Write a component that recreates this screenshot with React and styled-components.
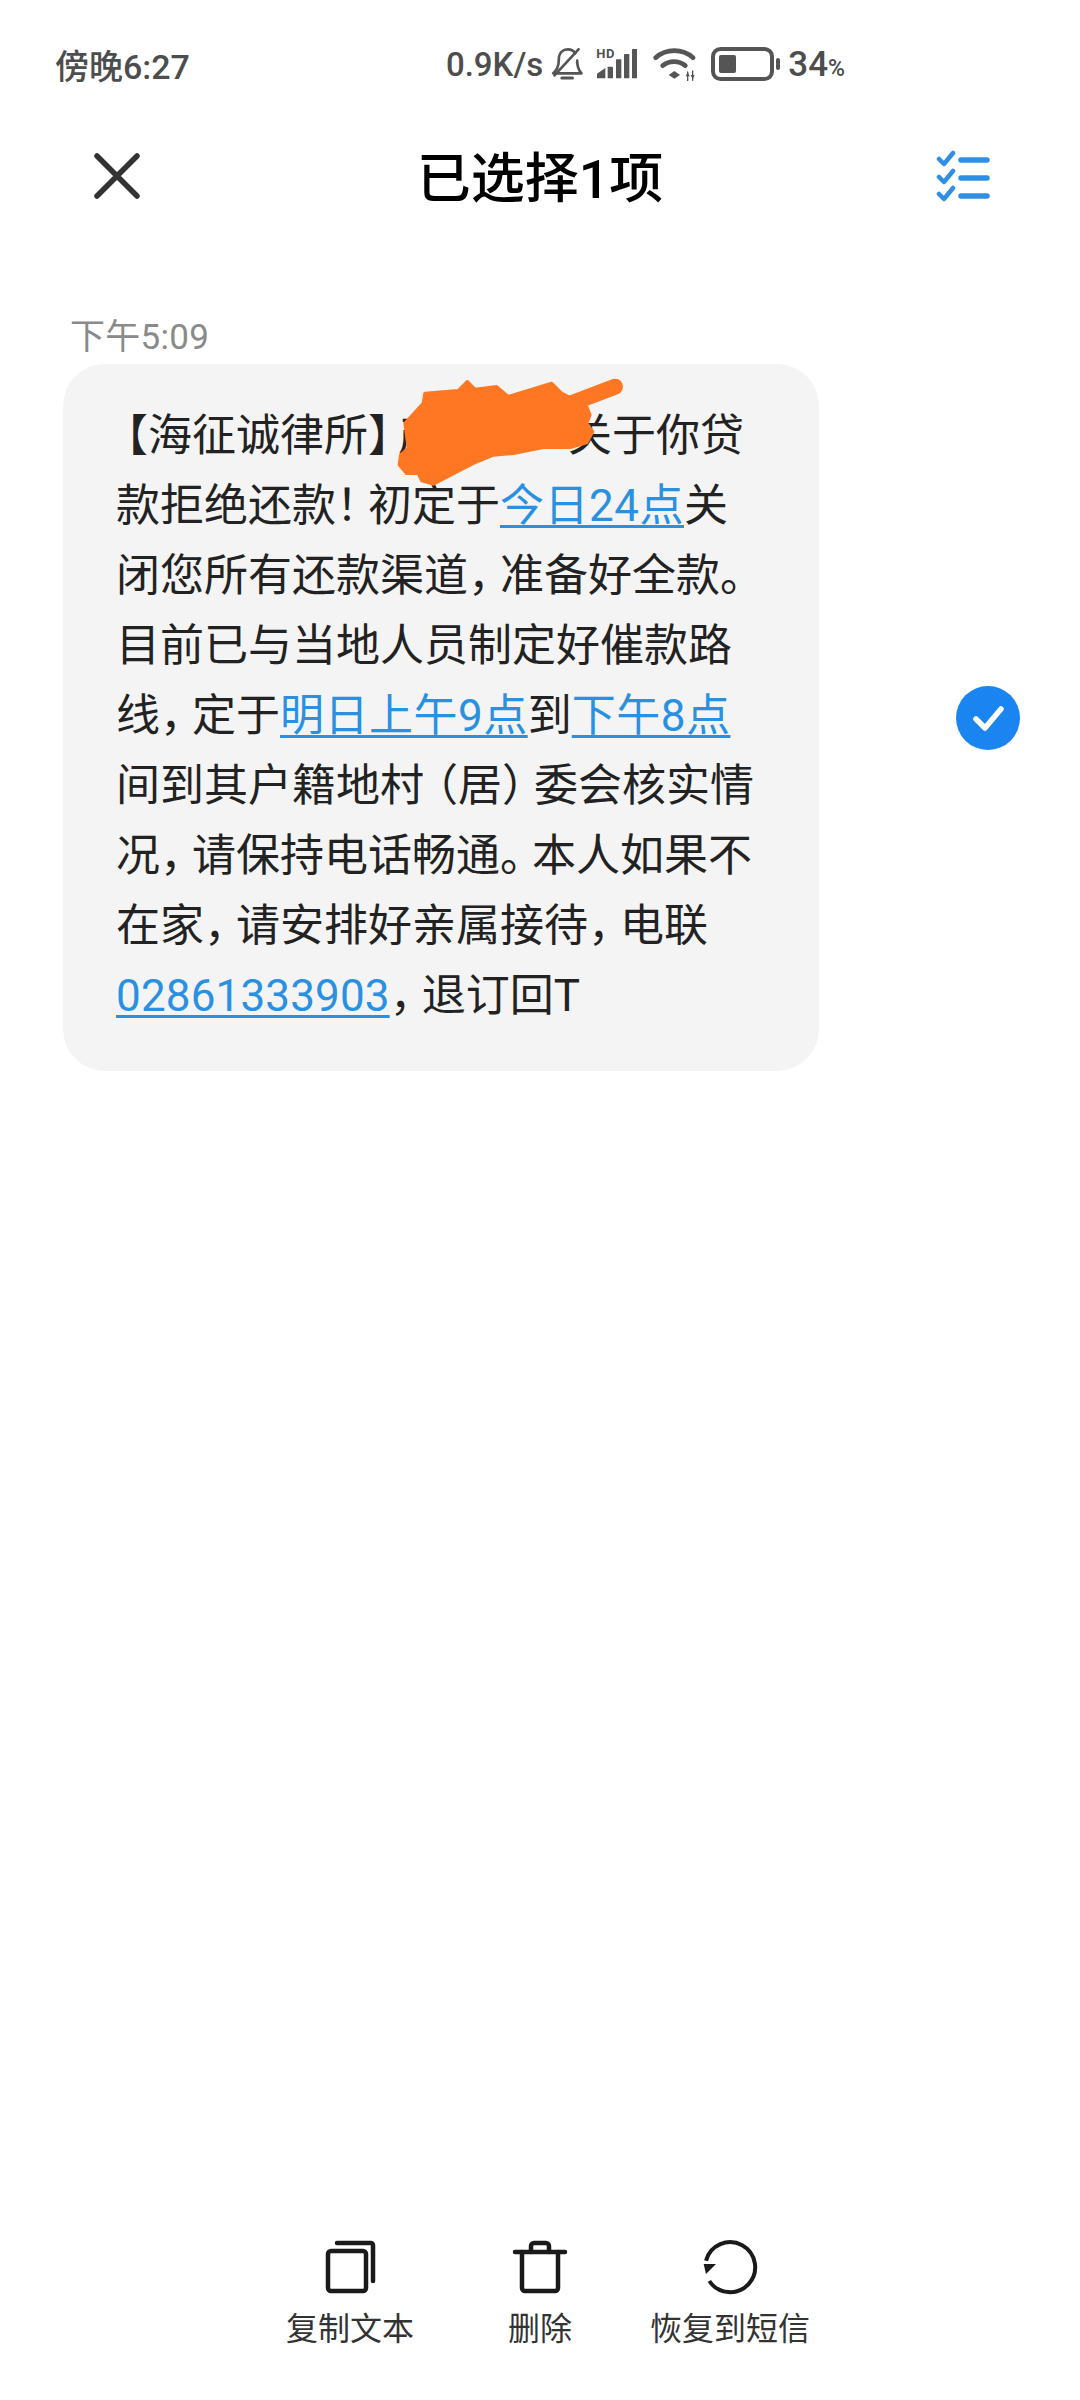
import React from "react";
import styled, { createGlobalStyle } from "styled-components";

const Global = createGlobalStyle`
  html, body { margin: 0; padding: 0; background: #fff; }
  body { font-family: Roboto, "Noto Sans CJK SC", sans-serif; }
`;

const Page = styled.div`
  width: 1080px;
  height: 2400px;
  display: flex;
  flex-direction: column;
  background: #fff;
  overflow: hidden;
`;

const StatusBar = styled.div`
  height: 128px;
  box-sizing: border-box;
  padding: 0 235px 0 55px;
  display: flex;
  align-items: center;
  color: #4d4d4d;
`;

const Clock = styled.span`
  font-size: 34px;
  font-weight: 500;
`;

const StatusRight = styled.div`
  margin-left: auto;
  display: flex;
  align-items: center;
`;

const Speed = styled.span`
  font-size: 33px;
  font-weight: 500;
  color: #4d4d4d;
`;

const StatusSvg = styled.svg`
  display: block;
  flex: none;
  margin-left: ${(p) => p.$gap}px;
`;

const SignalWrap = styled.span`
  position: relative;
  display: block;
  margin-left: 14px;
  width: 40px;
  height: 30px;
`;

const HdMark = styled.span`
  position: absolute;
  left: -1px;
  top: -2px;
  font-size: 13px;
  font-weight: 700;
  color: #505050;
  line-height: 13px;
  letter-spacing: 0.5px;
`;

const Percent = styled.span`
  font-size: 35px;
  color: #4d4d4d;
  margin-left: 8px;
  font-weight: 500;
`;

const PercentSign = styled.span`
  font-size: 23px;
  font-weight: 500;
`;

const NavBar = styled.div`
  height: 96px;
  position: relative;
  display: flex;
  align-items: center;
  justify-content: space-between;
  padding: 0 90px 0 94px;
`;

const Title = styled.div`
  position: absolute;
  left: 0;
  right: 0;
  text-align: center;
  font-size: 54px;
  font-weight: 500;
  color: #000;
  padding-bottom: 4px;
`;

const Stamp = styled.div`
  margin: 91px 0 0 70px;
  height: 49px;
  line-height: 46px;
  font-size: 35px;
  color: #8a8a8a;
  letter-spacing: 0.3px;
`;

const MessageRow = styled.div`
  display: flex;
  align-items: center;
  margin: 0 0 0 63px;
`;

const Bubble = styled.div`
  position: relative;
  width: 756px;
  height: 707px;
  box-sizing: border-box;
  padding: 37px 0 0 53px;
  background: #f4f4f4;
  border-radius: 42px;
  font-size: 44px;
  line-height: 70px;
  color: #222;
`;

const TextLine = styled.div`
  white-space: nowrap;
  height: 70px;
`;

const Link = styled.span`
  color: #2a90e2;
  letter-spacing: ${(p) => p.$spacing ?? 0.5}px;
  text-decoration: underline;
  text-decoration-thickness: 3px;
  text-underline-offset: 4px;
`;

const Punct = styled.span`
  margin-right: -12px;
`;

const OpenBracket = styled.span`
  margin-left: ${(p) => p.$shift}px;
`;

const CloseBracket = styled.span`
  margin-right: -14px;
`;

const HiddenRun = styled.span`
  display: inline-block;
  width: 126px;
`;

const Redaction = styled.svg`
  position: absolute;
  inset: 0;
  width: 756px;
  height: 707px;
`;

const CheckMark = styled.svg`
  width: 64px;
  height: 64px;
  margin-left: 137px;
  flex: none;
`;

const Toolbar = styled.div`
  margin-top: auto;
  height: 160px;
  margin-bottom: 4px;
  display: flex;
  justify-content: center;
`;

const ToolItem = styled.div`
  width: 190px;
  display: flex;
  flex-direction: column;
  align-items: center;
  font-size: 32px;
  color: #333;
`;

const ToolIcon = styled.svg`
  width: 56px;
  height: 56px;
  margin: 3px 0 11px;
`;

const ToolLabel = styled.span`
  white-space: nowrap;
  line-height: 46px;
`;

const BellIcon = () => (
  <StatusSvg $gap={8} width="32" height="32" viewBox="28 40 95 96" fill="none" stroke="#555" strokeWidth="8" strokeLinecap="round" strokeLinejoin="round">
    <path d="M34 116c10-10 17-18 17-42 0-20 12-30 27-30 10 0 18 4 22 12M106 78c0 16 4 28 13 38H34" />
    <path d="M60 130h32" strokeWidth="9" />
    <path d="M110 44 38 122" />
  </StatusSvg>
);

const SignalIcon = () => (
  <SignalWrap>
    <HdMark>HD</HdMark>
    <svg width="40" height="30" viewBox="165 42 120 90" fill="#555" style={{ display: "block" }}>
      <path d="M165 130v-14l25-17v31z" />
      <rect x="197" y="95" width="16" height="35" rx="2" />
      <rect x="222" y="73" width="16" height="57" rx="2" />
      <rect x="246" y="57" width="16" height="73" rx="2" />
      <rect x="270" y="42" width="16" height="88" rx="2" />
    </svg>
  </SignalWrap>
);

const WifiIcon = () => (
  <StatusSvg $gap={16} width="43" height="34" viewBox="333 38 129 102" fill="none" stroke="#555" strokeWidth="14" strokeLinecap="round">
    <path d="M341 70c32-28 80-28 112 0" />
    <path d="M362 94c20-16 48-16 68 0" />
    <path d="M380 122l17-12 17 12-17 11z" fill="#555" stroke="none" />
    <path d="M437 113v26M452 110v28" strokeWidth="4" />
    <path d="M431 126l6-13 6 13zM446 122l6 13 6-13z" fill="#555" stroke="none" />
  </StatusSvg>
);

const BatteryIcon = () => (
  <StatusSvg $gap={15} width="69" height="34" viewBox="0 0 69 34" fill="none">
    <rect x="2" y="2" width="59" height="30" rx="7.500" stroke="#555" strokeWidth="4" />
    <rect x="8" y="8" width="17" height="18" rx="2" fill="#555" />
    <rect x="65" y="11" width="4" height="12" rx="2" fill="#555" />
  </StatusSvg>
);

const CloseIcon = () => (
  <svg width="46" height="46" viewBox="0 0 46 46" fill="none" stroke="#333" strokeWidth="5.500" strokeLinecap="round">
    <path d="M3 3l40 40M43 3 3 43" />
  </svg>
);

const ChecklistIcon = () => (
  <svg width="54" height="52" viewBox="0 0 54 52" fill="none" stroke="#2f8fe4" strokeWidth="5.500" strokeLinecap="round" strokeLinejoin="round">
    <path d="M3 9l5 5 9-11M3 27l5 5 9-11M3 44l5 5 9-11" strokeWidth="4.500" />
    <path d="M25 10h26M25 28h26M25 46h26" />
  </svg>
);

const P = ({ children }) => <Punct>{children}</Punct>;

export default function App() {
  return (
    <Page lang="zh-CN">
      <Global />
      <StatusBar>
        <Clock>傍晚6:27</Clock>
        <StatusRight>
          <Speed>0.9K/s</Speed>
          <BellIcon />
          <SignalIcon />
          <WifiIcon />
          <BatteryIcon />
          <Percent>34<PercentSign>%</PercentSign></Percent>
        </StatusRight>
      </StatusBar>

      <NavBar>
        <Title>已选择1项</Title>
        <CloseIcon />
        <ChecklistIcon />
      </NavBar>

      <Stamp>下午5:09</Stamp>

      <MessageRow>
        <Bubble>
          <TextLine><OpenBracket $shift={-12}>【</OpenBracket>海征诚律所<CloseBracket>】</CloseBracket>产<HiddenRun />关于你贷</TextLine>
          <TextLine>款拒绝还款<P>！</P>初定于<Link>今日24点</Link>关</TextLine>
          <TextLine>闭您所有还款渠道<P>，</P>准备好全款。</TextLine>
          <TextLine>目前已与当地人员制定好催款路</TextLine>
          <TextLine>线<P>，</P>定于<Link>明日上午9点</Link>到<Link>下午8点</Link></TextLine>
          <TextLine>间到其户籍地村<OpenBracket $shift={-10}>（</OpenBracket>居<P>）</P>委会核实情</TextLine>
          <TextLine>况<P>，</P>请保持电话畅通<P>。</P>本人如果不</TextLine>
          <TextLine>在家<P>，</P>请安排好亲属接待<P>，</P>电联</TextLine>
          <TextLine><Link $spacing={0.15}>02861333903</Link><P>，</P>退订回T</TextLine>
          <Redaction viewBox="63 364 756 707">
            <g transform="translate(380 360) scale(0.3333)" fill="#ff7722" stroke="#ff7722" strokeLinecap="round" strokeLinejoin="round">
              <path fill="none" strokeWidth="48" d="M705 80 500 158" />
              <polygon
                strokeWidth="10"
                points="75,190 130,130 135,100 235,92 262,65 285,88 350,80 385,110 515,70 545,100 620,140 630,165 620,190 638,215 620,248 570,262 490,262 400,280 340,285 280,310 160,372 125,362 115,340 80,340 58,315 62,285 85,265"
              />
            </g>
          </Redaction>
        </Bubble>
        <CheckMark viewBox="0 0 64 64">
          <circle cx="32" cy="32" r="32" fill="#1a85f0" />
          <path d="M20 33l9 9 16-19" fill="none" stroke="#fff" strokeWidth="5.500" strokeLinecap="round" strokeLinejoin="round" />
        </CheckMark>
      </MessageRow>

      <Toolbar>
        <ToolItem>
          <ToolIcon viewBox="0 0 56 56" fill="none" stroke="#1a1a1a" strokeWidth="4.500" strokeLinecap="round" strokeLinejoin="round">
            <rect x="6" y="12" width="38" height="40" rx="3" />
            <path d="M15 4h34a2 2 0 0 1 2 2v36" />
          </ToolIcon>
          <ToolLabel>复制文本</ToolLabel>
        </ToolItem>
        <ToolItem>
          <ToolIcon viewBox="0 0 56 56" fill="none" stroke="#1a1a1a" strokeWidth="4.500" strokeLinecap="round" strokeLinejoin="round">
            <path d="M3 13h50" />
            <path d="M10 13v36a3 3 0 0 0 3 3h30a3 3 0 0 0 3-3V13" />
            <path d="M19 13V7a3 3 0 0 1 3-3h12a3 3 0 0 1 3 3v6" />
          </ToolIcon>
          <ToolLabel>删除</ToolLabel>
        </ToolItem>
        <ToolItem>
          <ToolIcon viewBox="33 13 168 168" fill="none" stroke="#1a1a1a" strokeWidth="12">
            <path d="M45 78A75 75 0 1 1 55 139" />
            <path d="M38 88H75L45 118z" fill="#1a1a1a" stroke="none" />
          </ToolIcon>
          <ToolLabel>恢复到短信</ToolLabel>
        </ToolItem>
      </Toolbar>
    </Page>
  );
}
